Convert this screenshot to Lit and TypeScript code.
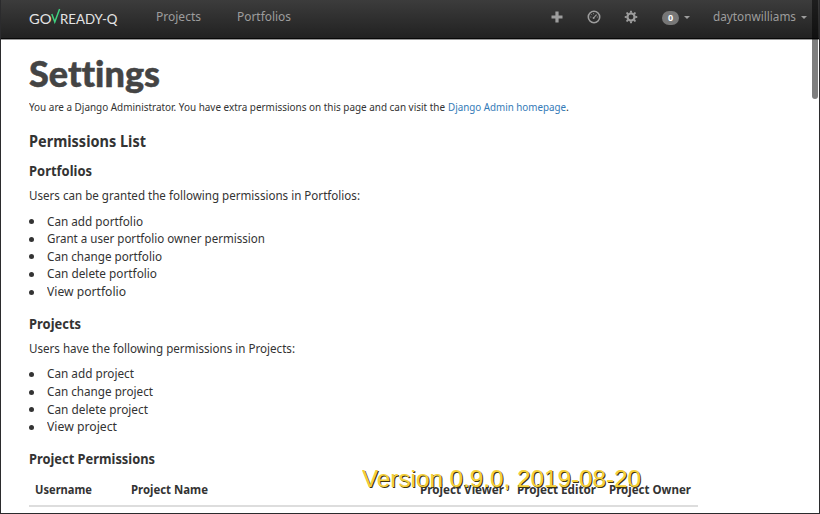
import { LitElement, html, css, svg } from "lit";
import { customElement, property } from "lit/decorators.js";

/** A run of text whose glyphs are condensed or widened to a set measure. */
@customElement("fit-text")
class FitText extends LitElement {
  @property({ type: Number }) w = 0;
  static styles = css`
    :host { display: inline-block; white-space: nowrap; }
    .run { display: inline-block; transform-origin: 0 50%; }
  `;
  render() {
    return html`<span class="run"><slot></slot></span>`;
  }
  firstUpdated() {
    const run = this.renderRoot.querySelector(".run") as HTMLElement;
    const natural = run.getBoundingClientRect().width;
    this.style.width = `${this.w}px`;
    if (natural) run.style.transform = `scaleX(${this.w / natural})`;
  }
}

type Item = [string, number];

const portfolioPerms: Item[] = [
  ["Can add portfolio", 96],
  ["Grant a user portfolio owner permission", 218],
  ["Can change portfolio", 115],
  ["Can delete portfolio", 110],
  ["View portfolio", 79],
];
const projectPerms: Item[] = [
  ["Can add project", 87],
  ["Can change project", 106],
  ["Can delete project", 101],
  ["View project", 70],
];

@customElement("app-root")
class AppRoot extends LitElement {
  static styles = css`
    :host {
      display: block; position: relative; box-sizing: border-box;
      width: 820px; height: 514px; overflow: hidden; background: #fff;
      border: 1px solid #2b2b2d; border-top: 0; color: #333;
      font: 12.6px/17.6px "Noto Sans", sans-serif;
    }
    * { box-sizing: border-box; }
    .nav {
      display: flex; height: 40px; padding: 0 12px 0 28px;
      background: linear-gradient(#3c3c3c, #222 37px);
      border-bottom: 1px solid #999; box-shadow: inset 0 -1px #080808;
      color: #9d9d9d; line-height: 33px; align-items: flex-start;
    }
    .logo { display: flex; width: 127px; height: 36px; font: 400 14.2px/37px Lato, sans-serif; color: #e4e4e4; }
    .check { display: block; width: 10px; height: 16px; margin: 8px -1px 0 -1px; }
    .links { display: flex; gap: 36px; }
    .tools { display: flex; margin-left: auto; height: 33px; align-items: center; }
    .tools svg { display: block; }
    .plus { margin-right: 24px; }
    .gauge { margin-right: 23px; }
    .gear { margin-right: 24px; }
    .badge {
      width: 17px; height: 14px; border-radius: 7px; background: #777; color: #fff;
      font: 700 9px/14px "Noto Sans", sans-serif; text-align: center; margin-top: 2px;
    }
    .caret { width: 0; border: 3px solid transparent; border-top-color: #9d9d9d; border-bottom: 0; margin: 2px 0 0 5px; }
    .user { margin-left: 23px; height: 33px; }
    .page { padding: 0 28px; }
    h1, h2, h3, p, ul { margin: 0; padding: 0; }
    h1 {
      height: 51px; padding-top: 10px; font: 900 36.5px/46px Lato, sans-serif; color: #444;
      -webkit-text-stroke: .5px #444; font-variant-ligatures: none;
    }
    .intro { height: 34px; padding-top: 7px; font-size: 10.9px; }
    .intro a { color: #337ab7; text-decoration: none; margin-left: 3px; }
    h2 { height: 35px; padding-top: 6px; font: 700 16.6px/20px "Noto Sans", sans-serif; }
    h3 { font: 700 13.8px/18px "Noto Sans", sans-serif; height: 25px; padding-top: 2px; }
    .lead { height: 27.5px; padding-top: 2px; }
    ul { list-style: none; display: grid; grid-auto-rows: 17.6px; margin-bottom: 12.5px; }
    li { display: flex; align-items: center; }
    li::before { content: ""; width: 5px; height: 5px; border-radius: 50%; background: #333; margin-right: 13px; margin-top: 1px; }
    .last { height: 26.4px; }
    .heads {
      display: grid; grid-template-columns: 96px 289px 97px 92px 96px; width: 669px; height: 32px;
      padding: 6px 0 0 6px; border-bottom: 2px solid #ddd; font-weight: 700; font-size: 12.3px;
    }
    .scroll { position: absolute; right: 1px; top: -6px; width: 6px; height: 105px; border-radius: 3px; background: rgba(0,0,0,.5); }
    .version {
      position: absolute; left: 361px; top: 464px; font: 24px/30px "Liberation Sans", Arial, sans-serif;
      color: #f4d03a; text-shadow: 1px 1px 0 #3d3410;
    }
  `;

  list(items: Item[]) {
    return html`<ul>${items.map(([t, w]) => html`<li><fit-text w=${w}>${t}</fit-text></li>`)}</ul>`;
  }

  render() {
    const teeth = [0, 45, 90, 135, 180, 225, 270, 315];
    return html`
      <nav class="nav">
        <div class="logo">
          <fit-text w="22.5">GO</fit-text>
          <svg class="check" viewBox="0 0 10 16"><path d="M.8 6 L3.8 14 L8.6 1" fill="none" stroke="#3fd07e" stroke-width="1.5" /></svg>
          <fit-text w="57.5">READY-Q</fit-text>
        </div>
        <div class="links">
          <fit-text w="45">Projects</fit-text>
          <fit-text w="54">Portfolios</fit-text>
        </div>
        <div class="tools">
          <svg class="plus" width="12" height="12" viewBox="0 0 12 12"><path d="M6 .5V11.5M.5 6H11.5" stroke="#9d9d9d" stroke-width="3.2" /></svg>
          <svg class="gauge" width="14" height="14" viewBox="0 0 14 14">
            <circle cx="7" cy="7" r="5.7" fill="none" stroke="#9d9d9d" stroke-width="1.6" />
            <path d="M6.5 8 L9.6 4.6" stroke="#9d9d9d" stroke-width="1.1" />
            <circle cx="6.6" cy="8" r="1" fill="#9d9d9d" />
            <path d="M3.3 7h1M4.3 4.4l.7.7M6.6 3.2v1M9.8 7h1" stroke="#9d9d9d" stroke-width=".9" />
          </svg>
          <svg class="gear" width="14" height="14" viewBox="0 0 14 14">
            <circle cx="7" cy="7" r="3.5" fill="none" stroke="#9d9d9d" stroke-width="2.1" />
            ${teeth.map((a) => svg`<path d="M5.8 2.8L6.2 .7H7.8L8.2 2.8Z" fill="#9d9d9d" transform="rotate(${a} 7 7)" />`)}
          </svg>
          <span class="badge">0</span><span class="caret"></span>
          <fit-text class="user" w="83">daytonwilliams</fit-text><span class="caret"></span>
        </div>
      </nav>
      <main class="page">
        <h1><fit-text w="131">Settings</fit-text></h1>
        <p class="intro"><fit-text w="416">You are a Django Administrator. You have extra permissions on this page and can visit the</fit-text><a><fit-text w="118">Django Admin homepage</fit-text></a>.</p>
        <h2><fit-text w="117">Permissions List</fit-text></h2>
        <h3><fit-text w="63">Portfolios</fit-text></h3>
        <p class="lead"><fit-text w="331">Users can be granted the following permissions in Portfolios:</fit-text></p>
        ${this.list(portfolioPerms)}
        <h3><fit-text w="52">Projects</fit-text></h3>
        <p class="lead"><fit-text w="266">Users have the following permissions in Projects:</fit-text></p>
        ${this.list(projectPerms)}
        <h3 class="last"><fit-text w="126">Project Permissions</fit-text></h3>
        <div class="heads">
          <fit-text w="57">Username</fit-text><fit-text w="77">Project Name</fit-text>
          <fit-text w="84">Project Viewer</fit-text><fit-text w="79">Project Editor</fit-text>
          <fit-text w="82">Project Owner</fit-text>
        </div>
      </main>
      <div class="scroll"></div>
      <div class="version"><fit-text w="279">Version 0.9.0, 2019-08-20</fit-text></div>
    `;
  }
}
